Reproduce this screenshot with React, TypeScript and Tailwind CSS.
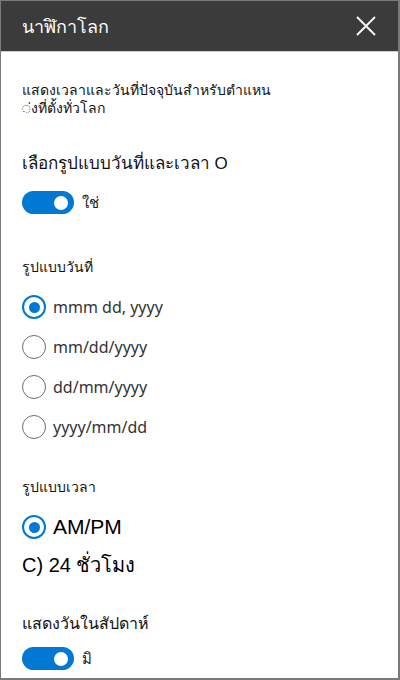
import React from "react";

const font = { fontFamily: '"Noto Sans", "Open Sans", "Liberation Sans", sans-serif' };

function Toggle({ label }: { label: string }) {
  return (
    <div className="flex items-center gap-[8px]">
      <div className="w-[52px] h-[23px] rounded-full bg-[#0078d4] flex items-center justify-end pr-[6px]">
        <div className="w-[14px] h-[14px] rounded-full bg-white" />
      </div>
      <span className="text-[15px] text-[#222] leading-none">{label}</span>
    </div>
  );
}

function Radio({ label, checked, big }: { label: string; checked?: boolean; big?: boolean }) {
  return (
    <div className="h-[40px] flex items-center gap-[7px]">
      {checked ? (
        <div className="w-[24px] h-[24px] rounded-full border-2 border-[#0078d4] flex items-center justify-center">
          <div className="w-[11px] h-[11px] rounded-full bg-[#0078d4]" />
        </div>
      ) : (
        <div className="w-[24px] h-[24px] rounded-full border-[1.5px] border-[#6b6b6b]" />
      )}
      <span
        className={big ? "text-[21px] text-black" : "text-[16px] text-[#333]"}
        style={big ? { fontFamily: '"Liberation Sans", sans-serif' } : undefined}
      >
        {label}
      </span>
    </div>
  );
}

export default function App() {
  return (
    <div
      className="w-[400px] h-[680px] bg-white border-l border-t border-r-2 border-b-2 border-[#7a7a7a] flex flex-col overflow-hidden"
      style={font}
    >
      <div className="h-[51px] bg-[#3b3b3b] flex items-center justify-between pl-[21px] pr-[22px] border-b border-[#cfcfcf] shrink-0">
        <span className="text-white text-[18px] leading-none">นาฬิกาโลก</span>
        <svg width="20" height="20" viewBox="0 0 20 20">
          <path d="M1 1 L19 19 M19 1 L1 19" stroke="white" strokeWidth="1.8" />
        </svg>
      </div>
      <div className="px-[21px] flex flex-col">
        <div className="mt-[29px] text-[14px] leading-[18px] text-[#111]">
          <div>แสดงเวลาและวันที่ปัจจุบันสำหรับตำแหน</div>
          <div>{"\u25CC\u0E48งที่ตั้งทั่วโลก"}</div>
        </div>
        <div className="mt-[34px] text-[17px] leading-[24px] text-[#111]">
          เลือกรูปแบบวันที่และเวลา <span style={{ fontFamily: '"Liberation Sans", sans-serif' }}>O</span>
        </div>
        <div className="mt-[15px]">
          <Toggle label="ใช่" />
        </div>
        <div className="mt-[43px] text-[14px] leading-[20px] text-[#111]">รูปแบบวันที่</div>
        <div className="mt-[10px] flex flex-col">
          <Radio label="mmm dd, yyyy" checked />
          <Radio label="mm/dd/yyyy" />
          <Radio label="dd/mm/yyyy" />
          <Radio label="yyyy/mm/dd" />
        </div>
        <div className="mt-[30px] text-[14px] leading-[20px] text-[#111]">รูปแบบเวลา</div>
        <div className="mt-[10px]">
          <Radio label="AM/PM" checked big />
        </div>
        <div
          className="mt-[4px] text-[20px] leading-[28px] text-black"
          style={{ fontFamily: '"Liberation Sans", "Noto Sans", sans-serif' }}
        >
          C) 24 ชั่วโมง
        </div>
        <div className="mt-[32px] text-[16px] leading-[24px] text-[#111]">แสดงวันในสัปดาห์</div>
        <div className="mt-[12px]">
          <Toggle label="มิ" />
        </div>
      </div>
    </div>
  );
}
